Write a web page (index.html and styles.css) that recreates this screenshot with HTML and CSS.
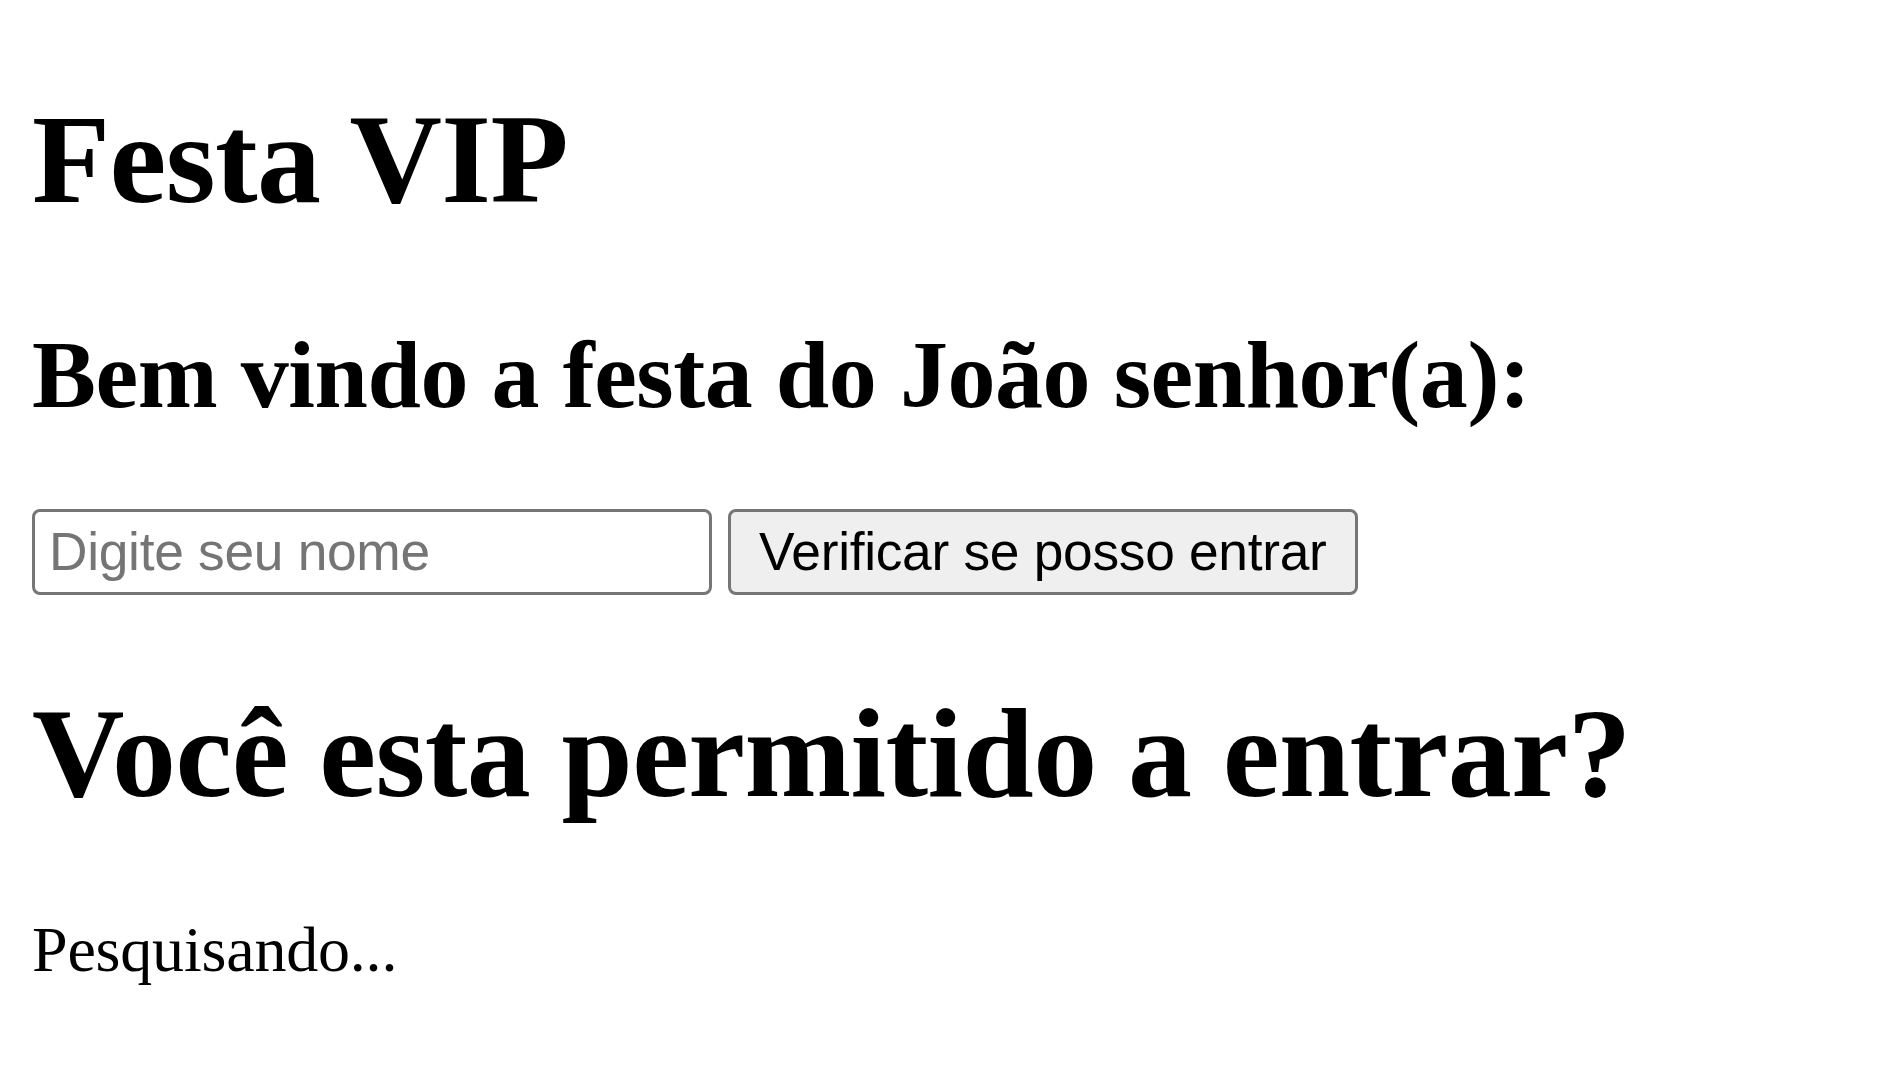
FILE: index.html
```html
<!DOCTYPE html>
<html lang="pt-BR">
<head>
<meta charset="utf-8">
<title>Festa VIP</title>
<link rel="stylesheet" href="styles.css">
</head>
<body class="page">
  <h1 class="title">Festa VIP</h1>
  <h2 class="welcome">Bem vindo a festa do João senhor(a):</h2>
  <div class="form-row">
    <input class="name-input" type="text" placeholder="Digite seu nome">
    <button class="check-btn" type="button">Verificar se posso entrar</button>
  </div>
  <h1 class="title question">Você esta permitido a entrar?</h1>
  <p class="status">Pesquisando...</p>
</body>
</html>
```

FILE: styles.css
```css
html {
  background: #ffffff;
}

.page {
  margin: 0 32px 32px;
  font-family: "Liberation Serif", "Times New Roman", serif;
  font-size: 64px;
  color: #000000;
}

.title {
  font-size: 128px;
  font-weight: bold;
  margin: 85.76px 0;
  line-height: normal;
  letter-spacing: -0.6px;
}

.welcome {
  font-size: 96px;
  font-weight: bold;
  margin: 79.68px 0;
  line-height: normal;
  letter-spacing: -0.45px;
}

.form-row {
  display: flex;
  align-items: flex-start;
  gap: 16px;
}

.name-input {
  box-sizing: border-box;
  width: 680px;
  height: 85.33px;
  margin: 0;
  padding: 9px 14px;
  border: 3px solid #767676;
  border-radius: 8px;
  background: #ffffff;
  font-family: "Liberation Sans", Arial, sans-serif;
  font-size: 53.33px;
  letter-spacing: -0.3px;
  color: #000000;
  outline: none;
}

.name-input::placeholder {
  color: #757575;
}

.check-btn {
  box-sizing: border-box;
  height: 85.33px;
  margin: 0;
  padding: 9px 28px;
  border: 3px solid #767676;
  border-radius: 8px;
  background: #efefef;
  font-family: "Liberation Sans", Arial, sans-serif;
  font-size: 53.33px;
  letter-spacing: -0.3px;
  color: #000000;
  line-height: normal;
}

.status {
  margin: 64px 0;
  line-height: normal;
  letter-spacing: -0.2px;
}
```
